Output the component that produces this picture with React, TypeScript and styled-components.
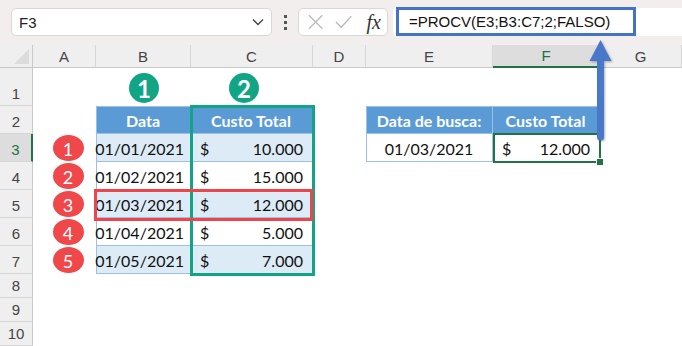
import React from 'react';
import styled, { createGlobalStyle, css } from 'styled-components';

const GlobalStyle = createGlobalStyle`
  html, body {
    margin: 0;
    padding: 0;
    background: #ffffff;
  }
  body {
    width: 682px;
    height: 346px;
    overflow: hidden;
  }
`;

const COLS = [33, 63, 95, 122, 53, 127, 107, 82];
const ROWS = [23, 38, 28, 28, 28, 28, 28, 28, 24, 24, 24];
const LETTERS = ['A', 'B', 'C', 'D', 'E', 'F', 'G'];

const gridTemplate = css`
  display: grid;
  grid-template-columns: ${COLS.map((c) => `${c}px`).join(' ')};
  grid-template-rows: ${ROWS.map((r) => `${r}px`).join(' ')};
`;

const Window = styled.div`
  position: relative;
  width: 682px;
  height: 346px;
  display: flex;
  flex-direction: column;
  overflow: hidden;
  font-family: 'Liberation Sans', Arial, sans-serif;
`;

/* ---------- formula bar ---------- */

const FormulaBar = styled.div`
  flex: none;
  height: 45px;
  box-sizing: border-box;
  padding: 8px 0 0 11px;
  display: flex;
  align-items: flex-start;
  background: #f3eeee;
`;

const NameBox = styled.div`
  width: 261px;
  height: 28px;
  box-sizing: border-box;
  display: flex;
  align-items: center;
  justify-content: space-between;
  padding: 0 7px 0 7px;
  background: #ffffff;
  border: 1px solid #dcd6d6;
  border-radius: 5px;
  font-size: 15px;
  color: #222;
`;

const Grip = styled.div`
  width: 26px;
  height: 28px;
  display: flex;
  flex-direction: column;
  align-items: center;
  justify-content: center;
  gap: 3px;

  span {
    width: 3px;
    height: 3px;
    background: #555;
  }
`;

const ToolBox = styled.div`
  width: 90px;
  height: 28px;
  box-sizing: border-box;
  display: flex;
  align-items: center;
  padding: 0 6px 0 9px;
  gap: 12px;
  background: #ffffff;
  border: 1px solid #dcd6d6;
  border-radius: 5px;
`;

const Fx = styled.span`
  margin-left: 2px;
  font-family: 'Liberation Serif', 'Times New Roman', serif;
  font-style: italic;
  font-size: 20px;
  color: #333;
  line-height: 1;
`;

const FormulaField = styled.div`
  flex: 1;
  height: 28px;
  margin-left: 5px;
  background: #ffffff;
  border-radius: 4px 0 0 4px;
`;

const FormulaText = styled.div`
  width: 240px;
  height: 29px;
  margin: -1px 0 0 3px;
  box-sizing: border-box;
  border: 3px solid #4472c4;
  display: flex;
  align-items: center;
  padding-left: 10px;
  font-size: 15px;
  color: #111;
`;

/* ---------- sheet ---------- */

const Sheet = styled.div`
  position: relative;
  flex: 1;
  ${gridTemplate};
  font-family: Lato, 'Liberation Sans', sans-serif;
`;

const Corner = styled.div`
  background: #efefef;
  border-right: 1px solid #c9c9c9;
  border-bottom: 1px solid #c9c9c9;
  box-sizing: border-box;
  position: relative;

  &::after {
    content: '';
    position: absolute;
    right: 3px;
    bottom: 3px;
    border-style: solid;
    border-width: 0 0 15px 15px;
    border-color: transparent transparent #dcdcdc transparent;
  }
`;

const ColHead = styled.div<{ $active?: boolean }>`
  display: flex;
  align-items: center;
  justify-content: center;
  box-sizing: border-box;
  font-family: 'Liberation Sans', Arial, sans-serif;
  font-size: 15px;
  background: ${(p) => (p.$active ? '#dddddd' : '#efefef')};
  color: ${(p) => (p.$active ? '#217346' : '#444')};
  border-right: 1px solid #d6d6d6;
  border-bottom: ${(p) => (p.$active ? '2px solid #217346' : '1px solid #c9c9c9')};
`;

const RowHead = styled.div<{ $active?: boolean }>`
  display: flex;
  align-items: flex-end;
  justify-content: center;
  padding-bottom: 3px;
  box-sizing: border-box;
  font-family: 'Liberation Sans', Arial, sans-serif;
  font-size: 15px;
  background: ${(p) => (p.$active ? '#dddddd' : '#efefef')};
  color: ${(p) => (p.$active ? '#217346' : '#444')};
  border-bottom: 1px solid #d6d6d6;
  border-right: ${(p) => (p.$active ? '2px solid #217346' : '1px solid #c9c9c9')};
`;

const Blank = styled.div`
  background: #ffffff;
`;

type Tone = 'head' | 'band' | 'plain';

const Cell = styled.div<{ $tone: Tone; $align?: 'left' | 'right' | 'center'; $first?: boolean }>`
  box-sizing: border-box;
  display: flex;
  align-items: center;
  justify-content: ${(p) =>
    p.$align === 'center' ? 'center' : p.$align === 'left' ? 'flex-start' : 'flex-end'};
  padding: 2px 6px 0 5px;
  font-size: 16px;
  white-space: nowrap;
  border-right: 1px solid #9bc2e6;
  border-bottom: 1px solid #9bc2e6;
  border-left: ${(p) => (p.$first ? '1px solid #9bc2e6' : 'none')};
  ${(p) =>
    p.$tone === 'head'
      ? css`
          background: #5b9bd5;
          color: #ffffff;
          font-weight: 700;
          border-top: 1px solid #9bc2e6;
          justify-content: center;
          padding-top: 0;
        `
      : css`
          background: ${p.$tone === 'band' ? '#ddebf7' : '#ffffff'};
          color: #111;
        `}
`;

const Money = styled(Cell)`
  justify-content: space-between;
  padding: 2px 9px 0 9px;
`;

const BadgeSlot = styled.div<{ $shift?: number }>`
  display: flex;
  align-items: center;
  justify-content: center;
  padding-left: ${(p) => Math.max(p.$shift || 0, 0)}px;
  padding-right: ${(p) => Math.max(-(p.$shift || 0), 0)}px;
  background: #ffffff;
`;

const StepBadge = styled.div`
  width: 30px;
  height: 30px;
  border-radius: 50%;
  background: #12a585;
  color: #ffffff;
  display: flex;
  align-items: center;
  justify-content: center;
  font-weight: 700;
  font-size: 24px;
  margin-top: 2px;
`;

const RowBadge = styled.div`
  width: 31px;
  height: 26px;
  border-radius: 50%;
  background: #f0474b;
  color: #ffffff;
  display: flex;
  align-items: center;
  justify-content: center;
  font-size: 18px;
  padding-top: 1px;
  box-sizing: border-box;
`;

/* ---------- marks laid over the sheet ---------- */

const Marks = styled.div`
  position: absolute;
  inset: 0;
  ${gridTemplate};
  pointer-events: none;
`;

const Frame = styled.div<{ $col: string; $row: string; $color: string; $width: number; $offset: string }>`
  grid-column: ${(p) => p.$col};
  grid-row: ${(p) => p.$row};
  margin: ${(p) => p.$offset};
  border: ${(p) => `${p.$width}px solid ${p.$color}`};
  position: relative;
`;

const FillHandle = styled.span`
  position: absolute;
  right: -5px;
  bottom: -5px;
  width: 6px;
  height: 6px;
  background: #217346;
  border: 1px solid #ffffff;
`;

const Arrow = styled.svg`
  position: absolute;
  left: 587px;
  top: 38px;
  filter: drop-shadow(1px 1px 1px rgba(0, 0, 0, 0.3));
`;

const entries = [
  { date: '01/01/2021', cost: '10.000' },
  { date: '01/02/2021', cost: '15.000' },
  { date: '01/03/2021', cost: '12.000' },
  { date: '01/04/2021', cost: '5.000' },
  { date: '01/05/2021', cost: '7.000' },
];

const ChevronDown = () => (
  <svg width="12" height="8" viewBox="0 0 12 8">
    <path d="M1 1.5 L6 6.5 L11 1.5" fill="none" stroke="#444" strokeWidth="1.4" />
  </svg>
);

const Cancel = () => (
  <svg width="16" height="16" viewBox="0 0 16 16">
    <path d="M1 1 L15 15 M15 1 L1 15" stroke="#b9b9b9" strokeWidth="1.3" />
  </svg>
);

const Confirm = () => (
  <svg width="18" height="14" viewBox="0 0 18 14">
    <path d="M1 7 L6.5 12.5 L17 1" fill="none" stroke="#b9b9b9" strokeWidth="1.3" />
  </svg>
);

export default function App() {
  const rows: React.ReactNode[] = [];

  for (let r = 1; r <= 10; r++) {
    const cells: React.ReactNode[] = [<RowHead key="h" $active={r === 3}>{r}</RowHead>];

    if (r === 1) {
      cells.push(
        <Blank key="a" />,
        <BadgeSlot key="b" $shift={1}>
          <StepBadge>1</StepBadge>
        </BadgeSlot>,
        <BadgeSlot key="c" $shift={-16}>
          <StepBadge>2</StepBadge>
        </BadgeSlot>,
        <Blank key="d" />,
        <Blank key="e" />,
        <Blank key="f" />,
        <Blank key="g" />
      );
    } else if (r === 2) {
      cells.push(
        <Blank key="a" />,
        <Cell key="b" $tone="head" $first>Data</Cell>,
        <Cell key="c" $tone="head">Custo Total</Cell>,
        <Blank key="d" />,
        <Cell key="e" $tone="head" $first>Data de busca:</Cell>,
        <Cell key="f" $tone="head">Custo Total</Cell>,
        <Blank key="g" />
      );
    } else if (r <= 7) {
      const i = r - 3;
      const tone: Tone = i % 2 === 0 ? 'band' : 'plain';
      cells.push(
        <BadgeSlot key="a" $shift={7}>
          <RowBadge>{i + 1}</RowBadge>
        </BadgeSlot>,
        <Cell key="b" $tone={tone} $first>{entries[i].date}</Cell>,
        <Money key="c" $tone={tone}>
          <span>$</span>
          <span>{entries[i].cost}</span>
        </Money>,
        <Blank key="d" />
      );
      if (r === 3) {
        cells.push(
          <Cell key="e" $tone="plain" $align="center" $first>01/03/2021</Cell>,
          <Money key="f" $tone="plain">
            <span>$</span>
            <span>12.000</span>
          </Money>
        );
      } else {
        cells.push(<Blank key="e" />, <Blank key="f" />);
      }
      cells.push(<Blank key="g" />);
    } else {
      LETTERS.forEach((l) => cells.push(<Blank key={l} />));
    }

    rows.push(<React.Fragment key={r}>{cells}</React.Fragment>);
  }

  return (
    <Window>
      <GlobalStyle />
      <FormulaBar>
        <NameBox>
          <span>F3</span>
          <ChevronDown />
        </NameBox>
        <Grip>
          <span />
          <span />
          <span />
        </Grip>
        <ToolBox>
          <Cancel />
          <Confirm />
          <Fx>fx</Fx>
        </ToolBox>
        <FormulaField>
          <FormulaText>=PROCV(E3;B3:C7;2;FALSO)</FormulaText>
        </FormulaField>
      </FormulaBar>

      <Sheet>
        <Corner />
        {LETTERS.map((l) => (
          <ColHead key={l} $active={l === 'F'}>
            {l}
          </ColHead>
        ))}
        {rows}

        <Marks>
          <Frame $col="4 / 5" $row="3 / 9" $color="#12a585" $width={3} $offset="-1px -2px -2px -1px" />
          <Frame $col="3 / 5" $row="6 / 7" $color="#ef4449" $width={3} $offset="-1px 0 -3px -2px" />
          <Frame $col="7 / 8" $row="4 / 5" $color="#217346" $width={2} $offset="-1px -1px -1px 0">
            <FillHandle />
          </Frame>
        </Marks>
      </Sheet>

      <Arrow width="28" height="106" viewBox="0 0 28 106">
        <path d="M13.5 2 L24.5 23 L2.5 23 Z" fill="#4a78c9" />
        <path d="M10 20 H17 V99 A3.5 3.5 0 0 1 10 99 Z" fill="#4a78c9" />
      </Arrow>
    </Window>
  );
}
